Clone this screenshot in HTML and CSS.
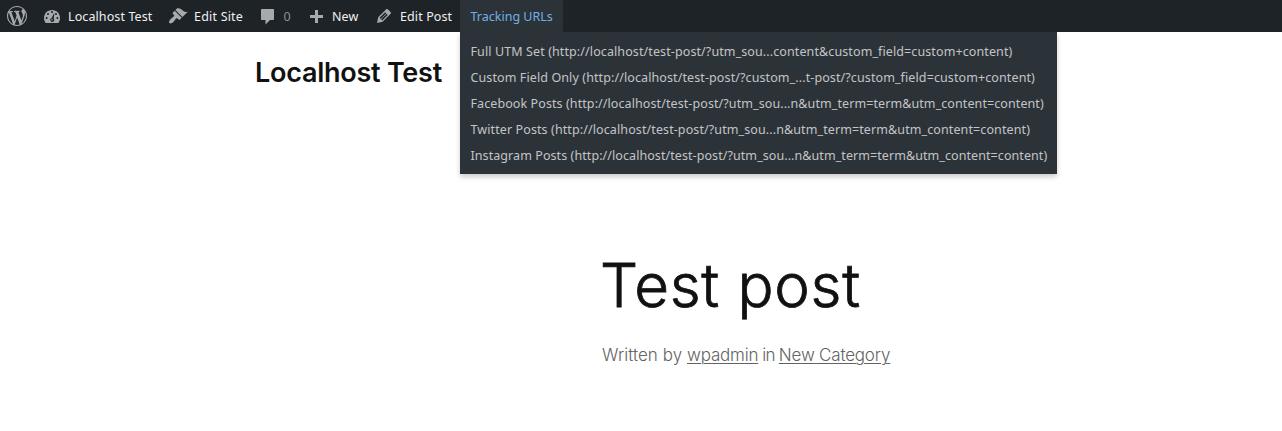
FILE: index.html
```html
<!DOCTYPE html>
<html lang="en">
<head>
<meta charset="utf-8">
<title>Test post – Localhost Test</title>
<link rel="stylesheet" href="styles.css">
</head>
<body>
<nav class="bar">
  <a class="item item-logo"><svg class="icon" viewBox="0 0 20 20"><path d="M20 10c0-5.51-4.49-10-10-10C4.48 0 0 4.49 0 10c0 5.52 4.48 10 10 10 5.51 0 10-4.48 10-10zM7.78 15.37L4.37 6.22c.55-.02 1.17-.08 1.17-.08.5-.06.44-1.13-.06-1.11 0 0-1.45.11-2.37.11-.18 0-.37 0-.58-.01C4.12 2.69 6.87 1.11 10 1.11c2.33 0 4.45.87 6.05 2.34-.68-.11-1.65.39-1.65 1.58 0 .74.45 1.36.9 2.1.35.61.55 1.36.55 2.46 0 1.49-1.4 5-1.4 5l-3.03-8.37c.54-.02.82-.17.82-.17.5-.05.44-1.25-.06-1.22 0 0-1.44.12-2.38.12-.87 0-2.33-.12-2.33-.12-.5-.03-.56 1.2-.06 1.22l.92.08 1.26 3.41zM17.41 10c.24-.64.74-1.87.43-4.25.7 1.29 1.05 2.71 1.05 4.25 0 3.29-1.73 6.24-4.4 7.78.97-2.59 1.94-5.2 2.92-7.78zM6.1 18.09C3.12 16.65 1.11 13.53 1.11 10c0-1.3.23-2.48.72-3.59C3.25 10.3 4.67 14.2 6.1 18.09zm4.03-6.63l2.58 6.98c-.86.29-1.76.45-2.71.45-.79 0-1.57-.11-2.29-.33.81-2.38 1.62-4.74 2.42-7.1z"/></svg></a>
  <a class="item item-site"><svg class="icon" viewBox="0 0 20 20"><path d="M3.76 17h12.48c1.1-1.37 1.76-3.11 1.76-5 0-4.42-3.58-8-8-8s-8 3.58-8 8c0 1.89.66 3.63 1.76 5z"/><g class="cut"><circle cx="10" cy="6" r="1"/><circle cx="6" cy="8" r="1"/><circle cx="14" cy="8" r="1"/><circle cx="4.6" cy="12" r="1"/><circle cx="15.4" cy="12" r="1"/><path d="M11.9 7.4l.5.2-.7 4.9a2 2 0 1 1-2-.5z"/></g><circle cx="10" cy="13.8" r=".8"/></svg><span class="label">Localhost Test</span></a>
  <a class="item item-edit-site"><svg class="icon" viewBox="0 0 20 20"><path d="M14.48 11.06L7.41 3.99l1.5-1.5c.5-.56 2.3-.47 3.51.32 1.21.8 1.43 1.28 2.91 2.1 1.18.64 2.45 1.26 4.45.85zm-.71.71L6.7 4.7 4.93 6.47c-.39.39-.39 1.02 0 1.41l1.06 1.06c.39.39.39 1.03 0 1.42-.6.6-1.43 1.11-2.21 1.69-.35.26-.7.53-1.01.84C1.43 14.23.4 16.08 1.4 17.07c.99 1 2.84-.03 4.18-1.36.31-.31.58-.66.85-1.02.57-.78 1.08-1.61 1.69-2.21.39-.39 1.02-.39 1.41 0l1.06 1.06c.39.39 1.02.39 1.41 0z"/></svg><span class="label label-edit-site">Edit Site</span></a>
  <a class="item item-comments"><svg class="icon" viewBox="0 0 20 20"><path d="M4 2h11c.6 0 1 .4 1 1v9c0 .6-.4 1-1 1h-3l-4.500 4.500V13H4c-.6 0-1-.4-1-1V3c0-.6.4-1 1-1z"/></svg><span class="label dim">0</span></a>
  <a class="item item-new"><svg class="icon" viewBox="0 0 20 20"><path d="M17 9v3h-5v5H9v-5H4V9h5V4h3v5z"/></svg><span class="label">New</span></a>
  <a class="item item-edit"><svg class="icon" viewBox="0 0 20 20"><path d="M13.89 3.39l2.71 2.72c.46.46.42 1.24.03 1.64l-8.01 8.02-5.56 1.16 1.16-5.58s7.6-7.63 7.99-8.03c.39-.39 1.22-.39 1.68.07zm-2.73 2.79l-5.59 5.61 1.11 1.11 5.54-5.65zm-2.97 8.23l5.58-5.6-1.07-1.08-5.59 5.6z"/></svg><span class="label">Edit Post</span></a>
  <div class="item item-tracking"><span class="label label-tracking">Tracking URLs</span>
    <div class="menu">
      <a class="row row-full">Full UTM Set (http://localhost/test-post/?utm_sou...content&amp;custom_field=custom+content)</a>
      <a class="row row-custom">Custom Field Only (http://localhost/test-post/?custom_...t-post/?custom_field=custom+content)</a>
      <a class="row row-facebook">Facebook Posts (http://localhost/test-post/?utm_sou...n&amp;utm_term=term&amp;utm_content=content)</a>
      <a class="row row-twitter">Twitter Posts (http://localhost/test-post/?utm_sou...n&amp;utm_term=term&amp;utm_content=content)</a>
      <a class="row row-instagram">Instagram Posts (http://localhost/test-post/?utm_sou...n&amp;utm_term=term&amp;utm_content=content)</a>
    </div>
  </div>
</nav>
<header class="site"><span class="site-title">Localhost Test</span></header>
<main class="post">
  <h1 class="title">Test post</h1>
  <p class="meta"><span class="byline">Written by </span><a class="link">wpadmin</a><span class="joiner"> in </span><a class="link">New Category</a></p>
</main>
</body>
</html>
```
FILE: styles.css
```css
* { box-sizing: border-box; }
body { margin: 0; background: #fff; color: #111; font-family: Inter, sans-serif; overflow: hidden; }
.bar { display: flex; height: 32px; background: #1d2327; color: #f0f0f1; font: 12.5px/32px "Noto Sans", sans-serif; white-space: nowrap; }
.item { display: flex; align-items: center; height: 32px; flex: none; }
.icon { width: 20px; height: 20px; fill: #a7aaad; flex: none; margin-right: 6px; }
.label { padding-top: 2px; letter-spacing: .1px; }
.label-edit-site { letter-spacing: .2px; }
.label-tracking { letter-spacing: 0; }
.cut { fill: #1d2327; }
.item-logo { width: 35px; padding-left: 7px; }
.item-site { width: 126px; padding-left: 7px; }
.item-edit-site { width: 90px; padding-left: 7px; }
.item-comments { width: 48px; padding-left: 6.5px; }
.item-comments .icon { margin-top: 2px; }
.item-new { width: 68px; padding-left: 7px; }
.item-edit { width: 93px; padding-left: 7px; }
.dim { color: #8c8f94; }
.item-tracking { position: relative; width: 103px; padding-left: 10.5px; background: #2c3338; color: #72aee6; }
.menu { position: absolute; top: 32px; left: 0; width: 597px; height: 142px; padding: 7px 10.5px 5px; background: #2c3338; color: #c3c4c7; box-shadow: 0 3px 5px rgba(0, 0, 0, .2); }
.row { display: block; height: 26px; line-height: 26px; letter-spacing: .105px; }
.row-facebook { letter-spacing: .09px; }
.row-instagram { letter-spacing: .075px; }
.site { padding: 23px 0 0 255px; }
.site-title { display: block; font-size: 27px; line-height: 36px; font-weight: 600; letter-spacing: -.25px; }
.post { padding: 154px 0 0 600px; }
.title { margin: 0; font-size: 60px; line-height: 80px; font-weight: 300; letter-spacing: .7px; -webkit-text-stroke: .8px #111; }
.meta { margin: 17px 0 0 2px; font-size: 17px; line-height: 27px; font-weight: 300; color: #636363; letter-spacing: -.2px; }
.byline { letter-spacing: .05px; }
.joiner { letter-spacing: -.75px; }
.link { text-decoration: underline; text-decoration-thickness: 1px; text-underline-offset: 2px; }
```
